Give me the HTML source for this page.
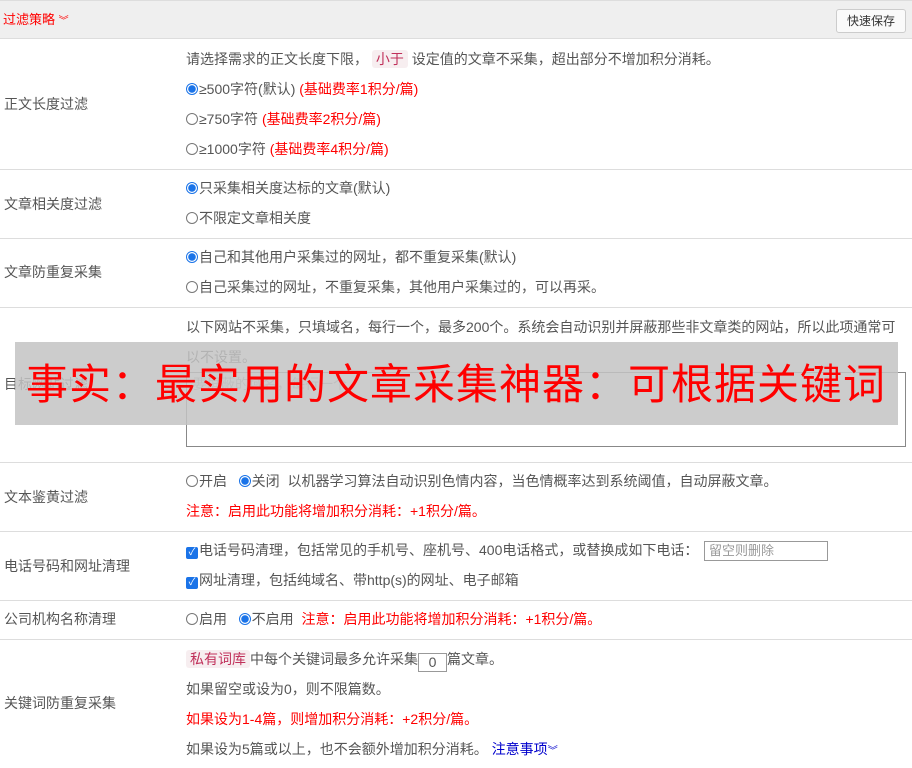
<!DOCTYPE html>
<html><head><meta charset="utf-8"><style>
*{margin:0;padding:0;box-sizing:border-box}
body{width:912px;height:768px;overflow:hidden;background:#fff;font-family:"Liberation Sans","Noto Sans CJK SC",sans-serif;font-size:14px;color:#555;position:relative}
.a{position:absolute;white-space:nowrap;line-height:16px}
.hr{position:absolute;left:0;width:912px;height:1px;background:#ddd}
.r{color:#f00}
.rad{display:inline-block;width:12px;height:12px;border:1px solid #777;border-radius:50%;vertical-align:-1px;margin-right:1px}
.rad.on{border:1px solid #1a73e8;background:radial-gradient(circle,#1a73e8 0 3.5px,#fff 4px)}
.cb{display:inline-block;width:12px;height:12px;background:#1a73e8;border-radius:2px;vertical-align:0px;color:#fff;font-size:10px;line-height:12px;text-align:center;margin-right:1px}
.tag{background:#f7eef0;color:#c0305a;padding:1px 4px;border-radius:3px}
</style></head><body>
<div style="position:absolute;left:0;top:0;width:912px;height:39px;background:#efefef;border-top:1px solid #ddd;border-bottom:1px solid #ddd"></div>
<div class="a r" style="left:3px;top:12px;font-size:13px">过滤策略 <span style="font-size:10px">︾</span></div>
<div class="a" style="left:836px;top:9px;width:70px;height:24px;border:1px solid #ccc;border-radius:3px;background:#fafafa;color:#333;font-size:12px;line-height:22px;text-align:center">快速保存</div>

<div class="a" style="left:4px;top:96px">正文长度过滤</div>
<div class="a" style="left:186px;top:51px">请选择需求的正文长度下限， <span class="tag">小于</span> 设定值的文章不采集，超出部分不增加积分消耗。</div>
<div class="a" style="left:186px;top:81px"><span class="rad on"></span>≥500字符(默认) <span class="r">(基础费率1积分/篇)</span></div>
<div class="a" style="left:186px;top:111px"><span class="rad"></span>≥750字符 <span class="r">(基础费率2积分/篇)</span></div>
<div class="a" style="left:186px;top:141px"><span class="rad"></span>≥1000字符 <span class="r">(基础费率4积分/篇)</span></div>
<div class="hr" style="top:169px"></div>

<div class="a" style="left:4px;top:196px">文章相关度过滤</div>
<div class="a" style="left:186px;top:180px"><span class="rad on"></span>只采集相关度达标的文章(默认)</div>
<div class="a" style="left:186px;top:210px"><span class="rad"></span>不限定文章相关度</div>
<div class="hr" style="top:238px"></div>

<div class="a" style="left:4px;top:264px">文章防重复采集</div>
<div class="a" style="left:186px;top:249px"><span class="rad on"></span>自己和其他用户采集过的网址，都不重复采集(默认)</div>
<div class="a" style="left:186px;top:279px"><span class="rad"></span>自己采集过的网址，不重复采集，其他用户采集过的，可以再采。</div>
<div class="hr" style="top:307px"></div>

<div class="a" style="left:4px;top:376px">目标网站过滤</div>
<div class="a" style="left:186px;top:319px">以下网站不采集，只填域名，每行一个，最多200个。系统会自动识别并屏蔽那些非文章类的网站，所以此项通常可</div>
<div class="a" style="left:186px;top:349px">以不设置。</div>
<div class="a" style="left:186px;top:372px;width:720px;height:75px;border:1px solid #888;color:#aaa;padding:3px 6px">要屏蔽的域名，每行一个</div>
<div class="hr" style="top:462px"></div>

<div class="a" style="left:4px;top:489px">文本鉴黄过滤</div>
<div class="a" style="left:186px;top:473px"><span class="rad"></span>开启 &nbsp;&nbsp;<span class="rad on"></span>关闭 &nbsp;以机器学习算法自动识别色情内容，当色情概率达到系统阈值，自动屏蔽文章。</div>
<div class="a r" style="left:186px;top:503px">注意：启用此功能将增加积分消耗：+1积分/篇。</div>
<div class="hr" style="top:531px"></div>

<div class="a" style="left:4px;top:558px">电话号码和网址清理</div>
<div class="a" style="left:186px;top:542px"><span class="cb">✓</span>电话号码清理，包括常见的手机号、座机号、400电话格式，或替换成如下电话：</div>
<div class="a" style="left:704px;top:541px;width:124px;height:20px;border:1px solid #999;color:#999;padding:1px 4px;font-size:13px">留空则删除</div>
<div class="a" style="left:186px;top:572px"><span class="cb">✓</span>网址清理，包括纯域名、带http(s)的网址、电子邮箱</div>
<div class="hr" style="top:600px"></div>

<div class="a" style="left:4px;top:611px">公司机构名称清理</div>
<div class="a" style="left:186px;top:611px"><span class="rad"></span>启用 &nbsp;&nbsp;<span class="rad on"></span>不启用 &nbsp;<span class="r">注意：启用此功能将增加积分消耗：+1积分/篇。</span></div>
<div class="hr" style="top:639px"></div>

<div class="a" style="left:4px;top:695px">关键词防重复采集</div>
<div class="a" style="left:186px;top:651px"><span class="tag">私有词库</span>中每个关键词最多允许采集<span style="display:inline-block;width:29px;height:19px;border:1px solid #999;text-align:center;vertical-align:-3px;line-height:17px">0</span>篇文章。</div>
<div class="a" style="left:186px;top:681px">如果留空或设为0，则不限篇数。</div>
<div class="a r" style="left:186px;top:711px">如果设为1-4篇，则增加积分消耗：+2积分/篇。</div>
<div class="a" style="left:186px;top:741px">如果设为5篇或以上，也不会额外增加积分消耗。 <span style="color:#00c">注意事项<span style="font-size:10px">︾</span></span></div>

<div style="position:absolute;left:15px;top:342px;width:883px;height:83px;background:rgba(195,195,195,0.85)"></div>
<div class="a" style="left:26px;top:360px;font-size:42px;line-height:50px;color:#f00;letter-spacing:1px">事实：最实用的文章采集神器：可根据关键词</div>
</body></html>
